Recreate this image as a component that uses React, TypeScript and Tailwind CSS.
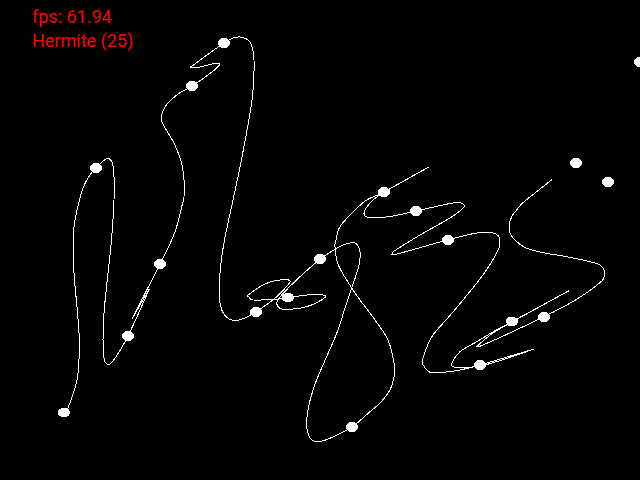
type Pt = [number, number];

// curve runs, split at the sharp tips so the spline doesn't overshoot there
const runs: Pt[][] = [
  [[64, 412.5], [68, 408], [77, 380], [79.3, 353], [79.3, 337], [77, 307], [74, 273], [73.5, 240], [74, 227], [77, 210], [83, 188], [90, 175], [96, 168], [106, 159], [112, 162], [114, 177], [114, 200], [111.5, 240], [108, 273], [104, 313], [103, 340], [104, 358], [107, 364], [113, 361], [128, 336], [149.3, 289]],
  [[149.3, 289], [132, 319]],
  [[132, 319], [160, 264], [171.7, 240], [176.7, 226.7], [181.7, 206.7], [184, 196.7], [184.3, 183.3], [181.7, 163.3], [178.3, 153.3], [173.3, 141.7], [166.7, 130.7], [162, 121.7], [161.3, 116.7], [165, 106.7], [171.7, 99.3], [180, 92.7], [192, 86], [212, 72], [219.5, 65], [219, 63.5]],
  [[219, 63.5], [212, 64], [200, 67], [191, 68], [190, 67.5]],
  [[190, 67.5], [207, 55], [224, 43], [232, 38.5], [240, 37], [250, 42], [254, 60], [252, 100], [240, 167], [224.5, 240], [220, 273], [219.3, 296.7], [221.7, 310], [226.7, 317.3], [233.3, 320.3], [241.7, 319.3], [256, 311.7], [275, 298.3], [289.3, 283.3], [289, 280.7], [285, 279.3], [266.7, 283.3], [248.3, 295], [249.3, 297.3], [253.3, 300], [275, 299.3], [288, 297.7], [306.7, 295], [323.3, 295], [324, 298.3], [306.7, 306.7], [283.3, 309.3], [276.7, 303.3], [281.7, 295], [300, 276.7], [320, 259.3], [335, 249.3], [343.3, 245], [351.7, 242.7], [356.7, 244], [360, 251.7], [359.3, 263.3], [355.5, 277], [351.7, 288], [345, 308], [336.7, 333.3], [319.5, 373], [313, 390], [308, 410], [306.7, 427], [310, 438], [315, 441.3], [320, 441.7], [333, 437], [352, 427], [370, 411.7], [380, 403], [390, 390], [394, 376.7], [394, 363], [388, 340], [375, 320], [360, 300], [351.7, 288], [338.3, 265], [335, 247], [336, 240], [340, 226.7], [353.3, 211.7], [366.7, 200], [384, 192], [429.3, 166.7]],
  [[429.3, 166.7], [384, 192]],
  [[384, 192], [373, 200], [365, 210], [365, 216], [373, 218], [393, 216], [416, 211], [453, 203], [463, 204], [463, 208], [450, 218], [420, 235], [395, 250.5], [393, 252.7], [397, 254], [447, 240], [477, 233], [493, 233], [499, 237], [499.7, 245], [496.7, 253], [483, 275], [453, 312], [433, 335], [425, 352], [422.3, 361.7], [425, 368], [430, 372.3], [440, 372.7], [460, 370], [480, 365], [534, 349]],
  [[534, 349], [505, 359], [480, 366], [456.7, 367.3], [451.7, 364], [460, 351.7], [476.7, 341.7], [493.3, 331.7], [512, 321.7], [569, 290.7]],
  [[569, 290.7], [512, 322], [493, 333], [480.3, 343.3]],
  [[480.3, 343.3], [481.7, 345.5], [544, 316.7], [576.7, 299.3], [600, 282.7], [604, 276.7], [604, 270], [600, 265], [590, 261.7], [566.7, 256.7], [543, 252.7], [526.7, 248.3], [516.7, 241.7], [510, 233.3], [509.3, 225], [511.7, 216.7], [516.7, 210], [523, 202.7], [536.7, 191.7], [552.3, 179.3]],
];

const nodes: Pt[] = [
  [64, 412.5], [128, 336], [160, 264], [96, 168], [192, 86], [224, 43], [256, 312], [288, 297.5], [320, 259],
  [352, 427], [384, 192], [416, 211], [448, 240], [480, 365], [512, 321.5], [544, 317], [576, 163], [608, 182], [640, 62],
];

// catmull-rom through the points, as cubic beziers
function toPath(p: Pt[]) {
  let d = `M${p[0][0]} ${p[0][1]}`;
  for (let i = 0; i < p.length - 1; i++) {
    const a = p[i - 1] ?? p[i];
    const b = p[i];
    const c = p[i + 1];
    const e = p[i + 2] ?? c;
    d += `C${b[0] + (c[0] - a[0]) / 6} ${b[1] + (c[1] - a[1]) / 6} ${c[0] - (e[0] - b[0]) / 6} ${c[1] - (e[1] - b[1]) / 6} ${c[0]} ${c[1]}`;
  }
  return d;
}

export default function App() {
  return (
    <div className="relative h-[480px] w-[640px] overflow-hidden bg-black pl-8 pt-[5px] font-['Roboto',sans-serif] text-[18px] leading-[24px] text-[#ff0000]">
      <svg className="absolute left-0 top-0" width="640" height="480" fill="none" stroke="#fff" strokeWidth="1" shapeRendering="crispEdges">
        {runs.map((r, i) => (
          <path key={i} d={toPath(r)} />
        ))}
        {nodes.map(([x, y], i) => (
          <ellipse key={i} cx={x} cy={y} rx="6" ry="5" fill="#fff" stroke="none" />
        ))}
      </svg>
      <div className="relative">fps: 61.94</div>
      <div className="relative">Hermite (25)</div>
    </div>
  );
}
